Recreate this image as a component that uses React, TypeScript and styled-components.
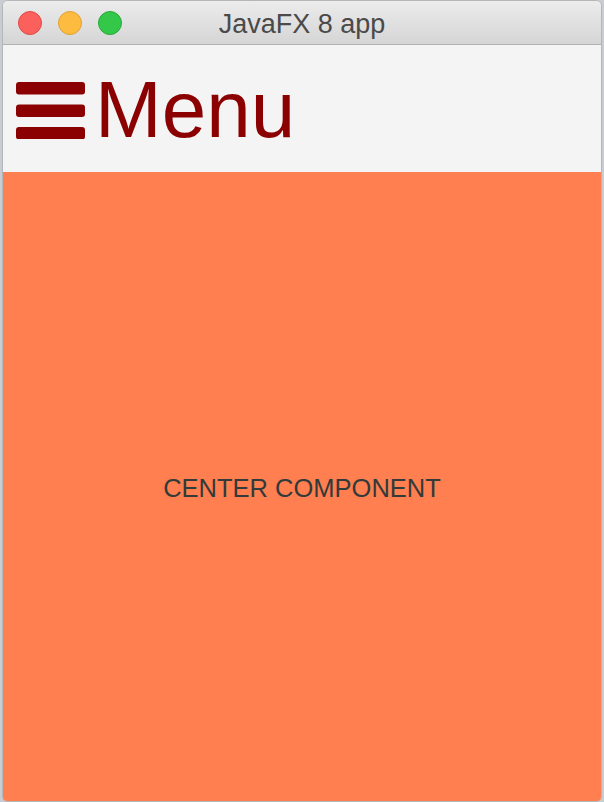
import React from "react";
import styled, { createGlobalStyle } from "styled-components";

const Global = createGlobalStyle`
  html, body { margin: 0; padding: 0; }
  body {
    background: #c9cdd1;
    font-family: "Liberation Sans", Arial, sans-serif;
    width: 604px;
    height: 802px;
    overflow: hidden;
  }
`;

const Window = styled.div`
  margin: 0 2px;
  width: 600px;
  height: 802px;
  box-sizing: border-box;
  border: 1px solid #b4b7ba;
  border-radius: 6px 6px 5px 5px;
  overflow: hidden;
  display: flex;
  flex-direction: column;
  background: #f4f4f4;
`;

const TitleBar = styled.div`
  height: 43px;
  flex: none;
  display: grid;
  grid-template-columns: 1fr auto 1fr;
  align-items: center;
  background: linear-gradient(#ececec, #d5d5d5);
  border-bottom: 1px solid #b1b1b1;
  padding: 0 15px;
`;

const Lights = styled.div`
  display: flex;
  gap: 16px;
  align-items: center;
`;

const Light = styled.span<{ $fill: string; $edge: string }>`
  width: 24px;
  height: 24px;
  box-sizing: border-box;
  border-radius: 50%;
  background: ${(p) => p.$fill};
  border: 1px solid ${(p) => p.$edge};
`;

const Title = styled.div`
  font-family: "Liberation Sans", Arial, sans-serif;
  font-size: 27px;
  color: #4a4a4a;
  line-height: 1;
  padding-top: 3px;
`;

const Header = styled.div`
  height: 127px;
  flex: none;
  display: flex;
  align-items: center;
  gap: 10px;
  padding-left: 13px;
  background: #f4f4f4;
`;

const MenuLabel = styled.span`
  font-family: "Liberation Sans", Arial, sans-serif;
  font-size: 80px;
  color: #8b0000;
  line-height: 1;
  padding-top: 3px;
`;

const Center = styled.div`
  flex: 1;
  background: #ff7f50;
  display: flex;
  align-items: center;
  justify-content: center;
`;

const CenterText = styled.span`
  font-family: "Liberation Sans", Arial, sans-serif;
  font-size: 25.5px;
  color: #323a3a;
  padding-top: 4px;
`;

const Hamburger = () => (
  <svg width="69" height="60" viewBox="0 0 69 60" style={{ display: "block" }}>
    <rect x="0" y="3" width="69" height="12.5" rx="3" fill="#8b0000" />
    <rect x="0" y="25.5" width="69" height="12.5" rx="3" fill="#8b0000" />
    <rect x="0" y="48" width="69" height="12.5" rx="3" fill="#8b0000" />
  </svg>
);

export default function App() {
  return (
    <>
      <Global />
      <Window>
        <TitleBar>
          <Lights>
            <Light $fill="#fc605c" $edge="#de4a45" />
            <Light $fill="#fdbc40" $edge="#dea034" />
            <Light $fill="#34c84a" $edge="#27a935" />
          </Lights>
          <Title>JavaFX 8 app</Title>
          <span />
        </TitleBar>
        <Header>
          <Hamburger />
          <MenuLabel>Menu</MenuLabel>
        </Header>
        <Center>
          <CenterText>CENTER COMPONENT</CenterText>
        </Center>
      </Window>
    </>
  );
}
